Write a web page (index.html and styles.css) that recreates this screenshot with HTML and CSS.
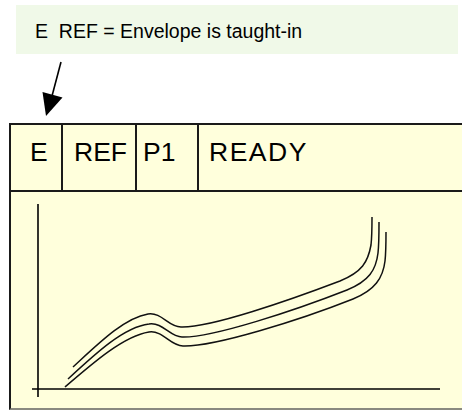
FILE: index.html
```html
<!DOCTYPE html>
<html lang="en">
<head>
    <meta charset="UTF-8">
    <title>Envelope taught-in</title>
    <link rel="stylesheet" href="styles.css">
</head>
<body>
    <div class="legend">E&nbsp; REF = Envelope is taught-in</div>

    <svg class="pointer" width="462" height="69" viewBox="0 54 462 69">
        <line x1="61" y1="62" x2="52" y2="96" stroke="#000" stroke-width="1.6"/>
        <polygon points="42.5,92 62.5,97.5 46,116" fill="#000"/>
    </svg>

    <div class="display">
        <div class="status-row">
            <div class="cell cell-mode">E</div>
            <div class="cell cell-ref">REF</div>
            <div class="cell cell-prog">P1</div>
            <div class="cell cell-state">READY</div>
        </div>
        <div class="plot">
            <svg width="460" height="216" viewBox="11 192 460 216">
                <g fill="none" stroke="#000" stroke-width="1.6">
                    <line x1="38" y1="204" x2="38" y2="397"/>
                    <line x1="32" y1="389" x2="440" y2="389"/>
                </g>
                <g fill="none" stroke="#111" stroke-width="1.5">
                    <path d="M73 367 C 98 344 124 318 148 314 C 162 312 168 327 181 327 C 210 328 290 300 340 281 C 362 272 368 262 371 245 C 372 236 372 226 372 217"/>
                    <path d="M68 379 C 96 353 124 327 149 324 C 163 322 170 337 182 337 C 212 338 296 310 347 290 C 369 281 376 270 378 253 C 379 244 379 232 379 222"/>
                    <path d="M65 387 C 94 362 124 336 149 332 C 163 330 170 346 183 346 C 214 347 300 320 353 299 C 375 290 383 278 385 261 C 386 252 386 240 386 232"/>
                </g>
            </svg>
        </div>
    </div>
</body>
</html>
```

FILE: styles.css
```css
body {
    margin: 0;
    width: 462px;
    height: 410px;
    overflow: hidden;
    background-color: #ffffff;
    font-family: "Liberation Sans", Arial, sans-serif;
    color: #000;
}

.legend {
    box-sizing: border-box;
    margin: 5px 0 0 16px;
    width: 442px;
    height: 49px;
    padding: 14px 0 0 19px;
    background-color: #f0f9e8;
    font-size: 19.5px;
    line-height: 24px;
    white-space: nowrap;
}

.pointer {
    display: block;
}

.display {
    margin-left: 9px;
    width: 470px;
    border: 2px solid #1a1a1a;
    border-bottom-color: #8a8a80;
    background-color: #ffffdc;
}

.status-row {
    display: flex;
    height: 65px;
    border-bottom: 2px solid #1a1a1a;
}

.cell {
    box-sizing: border-box;
    padding-top: 12px;
    font-size: 26.5px;
    line-height: 30px;
    border-right: 2px solid #1a1a1a;
}

.cell-mode {
    width: 52px;
    padding-left: 19px;
}

.cell-ref {
    width: 74px;
    padding-left: 11px;
}

.cell-prog {
    width: 62px;
    padding-left: 6px;
}

.cell-state {
    flex: 1;
    padding-left: 10px;
    letter-spacing: 1.5px;
    border-right: none;
}

.plot {
    height: 216px;
}

.plot svg {
    display: block;
}
```
